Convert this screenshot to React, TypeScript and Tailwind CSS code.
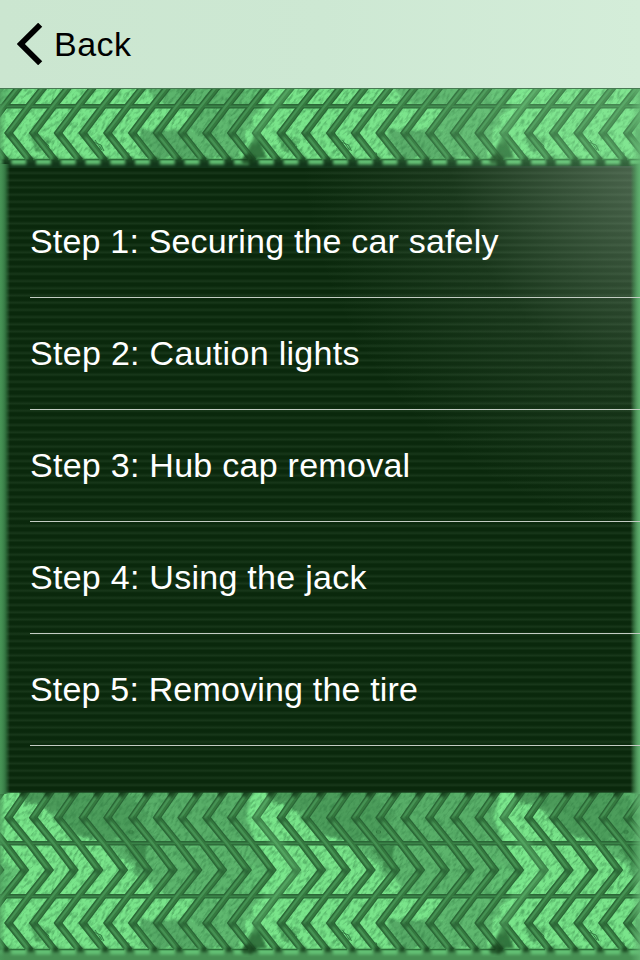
import React from "react";

const PITCH = 24.75;
const TILE = 247.5;
const grooves = Array.from({ length: 30 }, (_, i) => (i - 3) * PITCH);
const zigzag = grooves
  .map((x) => `M${x + 31} -7L${x + 8.5} 25.5L${x + 29.5} 51.5L${x + 49.5} 78L${x + 28.5} 104.5L${x + 8.5} 131L${x + 29} 157L${x + 33} 162`)
  .join("");
const rails = "M0 51.3H640M0 104.3H640";

const steps = [
  { label: "Step 1: Securing the car safely", spacing: "tracking-[0.18px]" },
  { label: "Step 2: Caution lights", spacing: "tracking-[0.3px]" },
  { label: "Step 3: Hub cap removal", spacing: "tracking-[0.27px]" },
  { label: "Step 4: Using the jack", spacing: "tracking-[0.27px]" },
  { label: "Step 5: Removing the tire", spacing: "tracking-[0.18px]" },
];

/* One repeat of the stained rubber surface. */
function Stains({ id }: { id: string }) {
  return (
    <g id={id}>
      <g filter={`url(#${id}-stain)`}>
        <path d="M24 -6H262L250 14L264 51H90L62 35L48 14H28Z" fill="#58ae68" />
        <path d="M55 -6L120 -6L145 22L140 50H98L66 35Z" fill="#4c9d5b" />
        <path d="M22 -6H70V22L48 14H28Z" fill="#4c9b5a" />
        <path d="M104 52H264L278 78L262 104H166L150 90L128 72Z" fill="#5cb46c" />
        <path d="M122 52H148L146 66L148 80L136 73Z" fill="#408c4e" />
        <path d="M-4 62L18 78L8 104H-6Z" fill="#62c073" />
        <path d="M197 105H262L248 130L240 157H148L135 128L190 125Z" fill="#5fb86f" />
        <path d="M138 127H184L196 157H158Z" fill="#56aa66" />
        <path d="M34 133L48 140L44 150L34 145ZM88 137L104 145L106 152L94 149Z" fill="#54ab63" />
        <path d="M84 110H104L92 131L125 157H108L80 131Z" fill="#76e188" />
      </g>
      <path d="M255 -4H267L257 25L276 50L289 77L272 104H256L272 77L256 50L246 25Z" fill="#79e68b" filter={`url(#${id}-soft)`} />
      <path d="M257 129L267 157H243Z" fill="#34763f" filter={`url(#${id}-soft)`} />
      <path d="M129 39H133V41H129ZM38 140L42 137L47 143L43 147ZM41 136L49 144L48 149M91 139L101 143L104 149M95 138L102 148M126 151H129V153H126Z" fill="none" stroke="#347b42" strokeWidth="1" />
    </g>
  );
}

function Tread({ id, top, height, tail }: { id: string; top: number; height: number; tail: string }) {
  return (
    <svg className="block w-full shrink-0" width="640" height={height} viewBox={`0 ${top} 640 ${height}`}>
      <defs>
        <filter id={`${id}-soft`} x="-10%" y="-10%" width="120%" height="120%" colorInterpolationFilters="sRGB">
          <feGaussianBlur stdDeviation="1.6" />
        </filter>
        <filter id={`${id}-stain`} x="-10%" y="-10%" width="120%" height="120%" colorInterpolationFilters="sRGB">
          <feTurbulence type="fractalNoise" baseFrequency="0.09" numOctaves="3" seed="3" result="n" />
          <feGaussianBlur in="SourceGraphic" stdDeviation="1.8" />
          <feDisplacementMap in2="n" scale="14" xChannelSelector="R" yChannelSelector="G" />
        </filter>
        <filter id={`${id}-blob`} x="-5%" y="-60%" width="110%" height="220%" colorInterpolationFilters="sRGB">
          <feGaussianBlur stdDeviation="1.8 1.4" />
        </filter>
        <filter id={`${id}-grain`} x="0" y="0" width="100%" height="100%" colorInterpolationFilters="sRGB">
          <feTurbulence type="fractalNoise" baseFrequency="0.15 0.4" numOctaves="3" seed="8" />
          <feColorMatrix values="0 0 0 0 0.17  0 0 0 0 0.46  0 0 0 0 0.24  3 0 0 0 -1.3" />
        </filter>
        <Stains id={id} />
      </defs>
      <rect y={top} width="640" height={height} fill="#79e48a" />
      <use href={`#${id}`} />
      <use href={`#${id}`} x={TILE} />
      <use href={`#${id}`} x={TILE * 2} />
      <g transform="rotate(-52 320 84)">
        <rect x="-40" y="-280" width="720" height="740" filter={`url(#${id}-grain)`} opacity="0.45" />
      </g>
      <g fill="none" strokeMiterlimit="8">
        <path d={zigzag} stroke="#2a6536" strokeWidth="7.2" />
        <path d={rails} stroke="#2b6636" strokeWidth="4.6" />
        <path d={rails} stroke="#3a8348" strokeWidth="1.8" />
        <path d={zigzag} stroke="#35793f" strokeWidth="5" />
        <path d={zigzag} stroke="#459253" strokeWidth="2.2" transform="translate(-0.8 -0.3)" />
      </g>
      <g fill="#23592e" filter={`url(#${id}-soft)`} opacity="0.75">
        {grooves.map((x) => (
          <g key={x}>
            <circle cx={x + 9.5} cy="28" r="3" />
            <circle cx={x + 48} cy="79" r="3" />
            <circle cx={x + 9.5} cy="133" r="3" />
          </g>
        ))}
      </g>
      {/* Light catching the grooves beside each bright streak. */}
      <path
        d="M267 -4L256 25L277 51L296 78L270 106L250 140M514 -4L503 25L524 51L543 78L517 106L497 140"
        fill="none"
        stroke="#86ee97"
        strokeWidth="13"
        opacity="0.2"
        filter={`url(#${id}-soft)`}
      />
      {top === 0 && (
        <g>
          <path d="M0 0.5H640" stroke="#1b4822" opacity="0.8" />
          {grooves.map((x) => (
            <path key={x} d={`M${x + 20} -2H${x + 30}L${x + 23} 6L${x + 20} 4Z`} fill="#0d3012" opacity="0.8" filter={`url(#${id}-soft)`} />
          ))}
        </g>
      )}
      <rect y="157.5" width="640" height="14" fill={tail} />
      <g filter={`url(#${id}-blob)`}>
        {grooves.map((x) => (
          <g key={x}>
            <rect x={x + 36} y="157" width="15" height="5.5" fill="#64c275" />
            <rect x={x + 28} y="155" width="6" height="5" fill="#1c4b24" />
          </g>
        ))}
      </g>
      <path d={grooves.map((x) => `M${x + 33} 157.5H${x + 50}`).join("")} stroke="#2c6f39" strokeWidth="1.3" />
      <path d="M249 150L254 155L252 162H243L241 158ZM497 150L502 155L500 162H491L489 158Z" fill="#123917" opacity="0.75" filter={`url(#${id}-soft)`} />
    </svg>
  );
}

export default function App() {
  return (
    <div className="relative flex h-[960px] w-[640px] flex-col overflow-hidden bg-[#0b290d] font-['Liberation_Sans',Arial,sans-serif]">
      <header className="relative z-10 flex h-[88px] shrink-0 items-center bg-linear-to-r from-[#cbe6d0] via-[#cde8d3] to-[#d4edd9] pl-[17px]">
        <svg width="26" height="42" viewBox="0 0 26 42" className="shrink-0">
          <path d="M23.2 1.8L3.8 21L23.2 40.2" fill="none" stroke="#000" strokeWidth="5.8" />
        </svg>
        <span className="ml-[11px] text-[34px] leading-none tracking-[0.5px] text-black">Back</span>
      </header>
      <Tread id="upper" top={86} height={80} tail="#12361a" />
      <main className="h-[624px] shrink-0 bg-[repeating-linear-gradient(180deg,#0a280c_0px,#0a280c_2.6px,#18371a_5.2px,#0a280c_7.2px)] pt-[18px] pl-[30px]">
        <ul>
          {steps.map(({ label, spacing }) => (
            <li key={label} className="relative z-10 flex h-[112px] items-center border-b border-[#c3ccc3] pb-[2px] text-[34px] leading-none text-white">
              <span className={`whitespace-nowrap ${spacing}`}>{label}</span>
            </li>
          ))}
        </ul>
      </main>
      <Tread id="lower" top={0} height={168} tail="#478f53" />
      <div className="pointer-events-none absolute inset-x-0 top-[88px] bottom-0">
        <div className="absolute inset-x-0 top-[78px] bottom-[168px] bg-[radial-gradient(ellipse_390px_400px_at_690px_-30px,rgba(170,190,172,0.5),rgba(170,190,172,0.3)_30%,rgba(170,190,172,0.09)_62%,transparent)]" />
        <div className="absolute inset-x-0 top-0 h-[78px] bg-[radial-gradient(ellipse_340px_300px_at_670px_40px,rgba(150,230,163,0.3),transparent)]" />
        <div className="absolute top-[76px] left-0 h-[630px] w-[10px] bg-linear-to-r from-[#438d52] via-[#347642] to-transparent" />
        <div className="absolute top-[76px] right-0 h-[630px] w-[10px] bg-linear-to-l from-[#4f9a60] via-[#3d8049]/60 to-transparent" />
        <div className="absolute top-0 left-0 h-full w-[5px] bg-linear-to-r from-[#4a9859]/70 to-transparent" />
        <div className="absolute top-0 right-0 h-full w-[9px] bg-linear-to-l from-[#64b673]/80 to-transparent" />
        <div className="absolute inset-x-0 top-0 h-px bg-[#477a52]" />
      </div>
    </div>
  );
}
